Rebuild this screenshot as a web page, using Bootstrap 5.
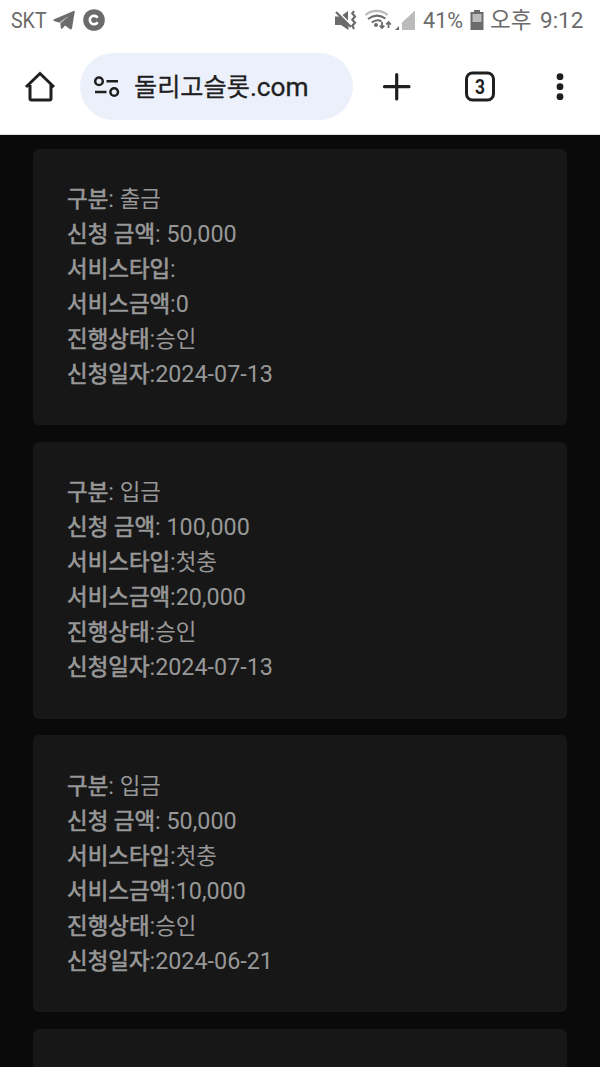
<!DOCTYPE html>
<html lang="ko">
<head>
<meta charset="utf-8">
<meta name="viewport" content="width=device-width, initial-scale=1">
<title>신청 내역</title>
<link href="https://cdn.jsdelivr.net/npm/bootstrap@5.3.0/dist/css/bootstrap.min.css" rel="stylesheet">
<style>
body{background:#0a0a0a;font-family:Roboto,"Noto Sans CJK KR",sans-serif;height:1067px;overflow:hidden}
.status{height:40px;padding:0 16px 0 11px;color:#6b6b6b;font-size:22.5px;line-height:40px;white-space:nowrap}
.status span{display:inline-block;transform-origin:0 50%}
.carrier{width:36px;margin-right:6px}
.carrier span{transform:scaleX(.87)}
.percent{width:41px;margin-left:7px;margin-right:6px}
.percent span{transform:scaleX(.96)}
.clock{width:94px;margin-left:6px;word-spacing:3px}
.toolbar{height:94px;padding-top:13px;color:#1f1f1f}
.toolbar svg,.status svg{display:block;flex:none}
.address{width:273px;height:67px;background:#ebf0fa;margin-left:24px;padding-left:14px;font-size:26.3px;line-height:67px;-webkit-text-stroke:.3px #1f1f1f}
.address span{margin-left:14px;padding-top:2px;white-space:nowrap}
.address .ko{margin:0;font-size:25.2px}
.rule{height:1px;background:#dfe1df}
.history{height:932px;padding:13.7px 33.3px 0;overflow:hidden;display:flex;flex-direction:column}
.record{flex:none;background:#171717;border:0;border-radius:6px;padding:33.3px 33.3px 33.3px 33.8px;margin-bottom:16.75px;height:276.6px;color:#989898;font-size:23.33px}
.record:last-child{flex:1 1 0;height:auto;min-height:0;padding:0;margin:0;border-radius:6px 6px 0 0}
.record div{height:35px;line-height:35px;white-space:nowrap}
.record b,.record .ko{font-size:22.4px;line-height:1}
.record b{font-weight:400;-webkit-text-stroke:.65px #989898}
</style>
</head>
<body>
<header class="bg-white">
  <div class="status d-flex align-items-center">
    <div class="carrier"><span>SKT</span></div>
    <svg width="22" height="20" viewBox="0 0 22 20"><path fill="#6b6b6b" d="M21.8 1.2 19 18.3Q18.6 20 17.2 19.2L12 15.6 9.4 18.6Q8.2 19.6 7.8 17.8L7.4 13.6 15.5 6.2 6 12.4 1 11Q-.5 10.2 1.2 9.2L20.5 1Q21.8.4 21.8 1.2Z"/><path d="M7.4 13.6 15.5 6.2 6 12.4Z" fill="#a0a0a0"/></svg>
    <svg class="ms-2" width="22" height="22" viewBox="0 0 22 22"><circle cx="11" cy="11" r="10.8" fill="#6b6b6b"/><path d="M14.6 8.8A4.2 4.2 0 1 0 14.6 13.2" fill="none" stroke="#fff" stroke-width="2.6"/></svg>
    <svg class="ms-auto" width="82" height="24" viewBox="334 8 82 24">
      <path d="M335 16.5H340L348.5 24.5V30L341 25H335ZM342.5 15 348 11V20.5Z" fill="#6b6b6b"/><path d="M336 12 351 27" fill="none" stroke="#6b6b6b" stroke-width="2.2"/>
      <path d="M354 11 352.3 13.5 355 16.5 352.3 19.7 355 22.7 352.3 25.7 354 29" fill="none" stroke="#6b6b6b" stroke-width="2.2"/>
      <path d="M365.5 15A17 17 0 0 1 387.5 15" fill="none" stroke="#bbb" stroke-width="2.3"/>
      <path d="M368 19Q376.5 12.5 385.5 18.5M371.8 22.5Q377 18.5 381.5 21.5" fill="none" stroke="#6b6b6b" stroke-width="2"/>
      <circle cx="376" cy="25" r="2" fill="#6b6b6b"/>
      <path d="M382 22V28M379.7 25.7 382 28 384.3 25.7M388.5 28V22M386.2 24.5 388.5 22 390.8 24.5" fill="none" stroke="#6b6b6b" stroke-width="1.8"/>
      <path d="M395 30H399V26Z" fill="#6b6b6b"/><path d="M402 30V22.5L415 10.5V30Z" fill="#bbb"/>
    </svg>
    <div class="percent"><span>41%</span></div>
    <svg width="14" height="20" viewBox="0 0 14 20"><path fill="#6b6b6b" d="M4 0H10V2H13.5V20H.5V2H4Z"/><path fill="#bbb" d="M2.5 4H11.5V12H2.5Z"/></svg>
    <div class="clock"><span>오후 9:12</span></div>
  </div>
  <nav class="toolbar d-flex align-items-start">
    <svg class="ms-4" width="32" height="67" viewBox="24 53 32 67"><path d="M26 87 40 73.5 54 87M30 85V98.5Q30 100 31.5 100H49.5Q51 100 51 98.5V85" fill="none" stroke="#1f1f1f" stroke-width="3"/></svg>
    <div class="address rounded-pill d-flex align-items-center">
      <svg width="26" height="22" viewBox="0 0 26 22" fill="none" stroke="#1f1f1f" stroke-width="2.5"><circle cx="5" cy="5.3" r="3.8"/><path d="M12.5 5.3H24M1 16H12.5"/><circle cx="20.2" cy="16" r="3.8"/></svg>
      <span><span class="ko">돌리고슬롯</span>.com</span>
    </div>
    <svg width="247" height="67" viewBox="353 53 247 67">
      <path d="M396.7 74.5V99M384.5 86.7H409" stroke="#1f1f1f" stroke-width="3.2" stroke-linecap="round"/>
      <rect x="466.5" y="73" width="27" height="27" rx="6" fill="none" stroke="#1f1f1f" stroke-width="3"/>
      <text x="480" y="93.5" text-anchor="middle" font-size="20" font-weight="700" textLength="10" lengthAdjust="spacingAndGlyphs" fill="#1f1f1f">3</text>
      <g fill="#1f1f1f"><circle cx="560" cy="76.7" r="3.4"/><circle cx="560" cy="86.7" r="3.4"/><circle cx="560" cy="96.7" r="3.4"/></g>
    </svg>
  </nav>
  <div class="rule"></div>
</header>
<main class="history">
  <section class="card record">
    <div><b>구분</b>: <span class="ko">출금</span></div>
    <div><b>신청 금액</b>: 50,000</div>
    <div><b>서비스타입</b>:</div>
    <div><b>서비스금액</b>:0</div>
    <div><b>진행상태</b>:<span class="ko">승인</span></div>
    <div><b>신청일자</b>:2024-07-13</div>
  </section>
  <section class="card record">
    <div><b>구분</b>: <span class="ko">입금</span></div>
    <div><b>신청 금액</b>: 100,000</div>
    <div><b>서비스타입</b>:<span class="ko">첫충</span></div>
    <div><b>서비스금액</b>:20,000</div>
    <div><b>진행상태</b>:<span class="ko">승인</span></div>
    <div><b>신청일자</b>:2024-07-13</div>
  </section>
  <section class="card record">
    <div><b>구분</b>: <span class="ko">입금</span></div>
    <div><b>신청 금액</b>: 50,000</div>
    <div><b>서비스타입</b>:<span class="ko">첫충</span></div>
    <div><b>서비스금액</b>:10,000</div>
    <div><b>진행상태</b>:<span class="ko">승인</span></div>
    <div><b>신청일자</b>:2024-06-21</div>
  </section>
  <section class="card record"></section>
</main>
<script src="https://cdn.jsdelivr.net/npm/bootstrap@5.3.0/dist/js/bootstrap.bundle.min.js"></script>
</body>
</html>
